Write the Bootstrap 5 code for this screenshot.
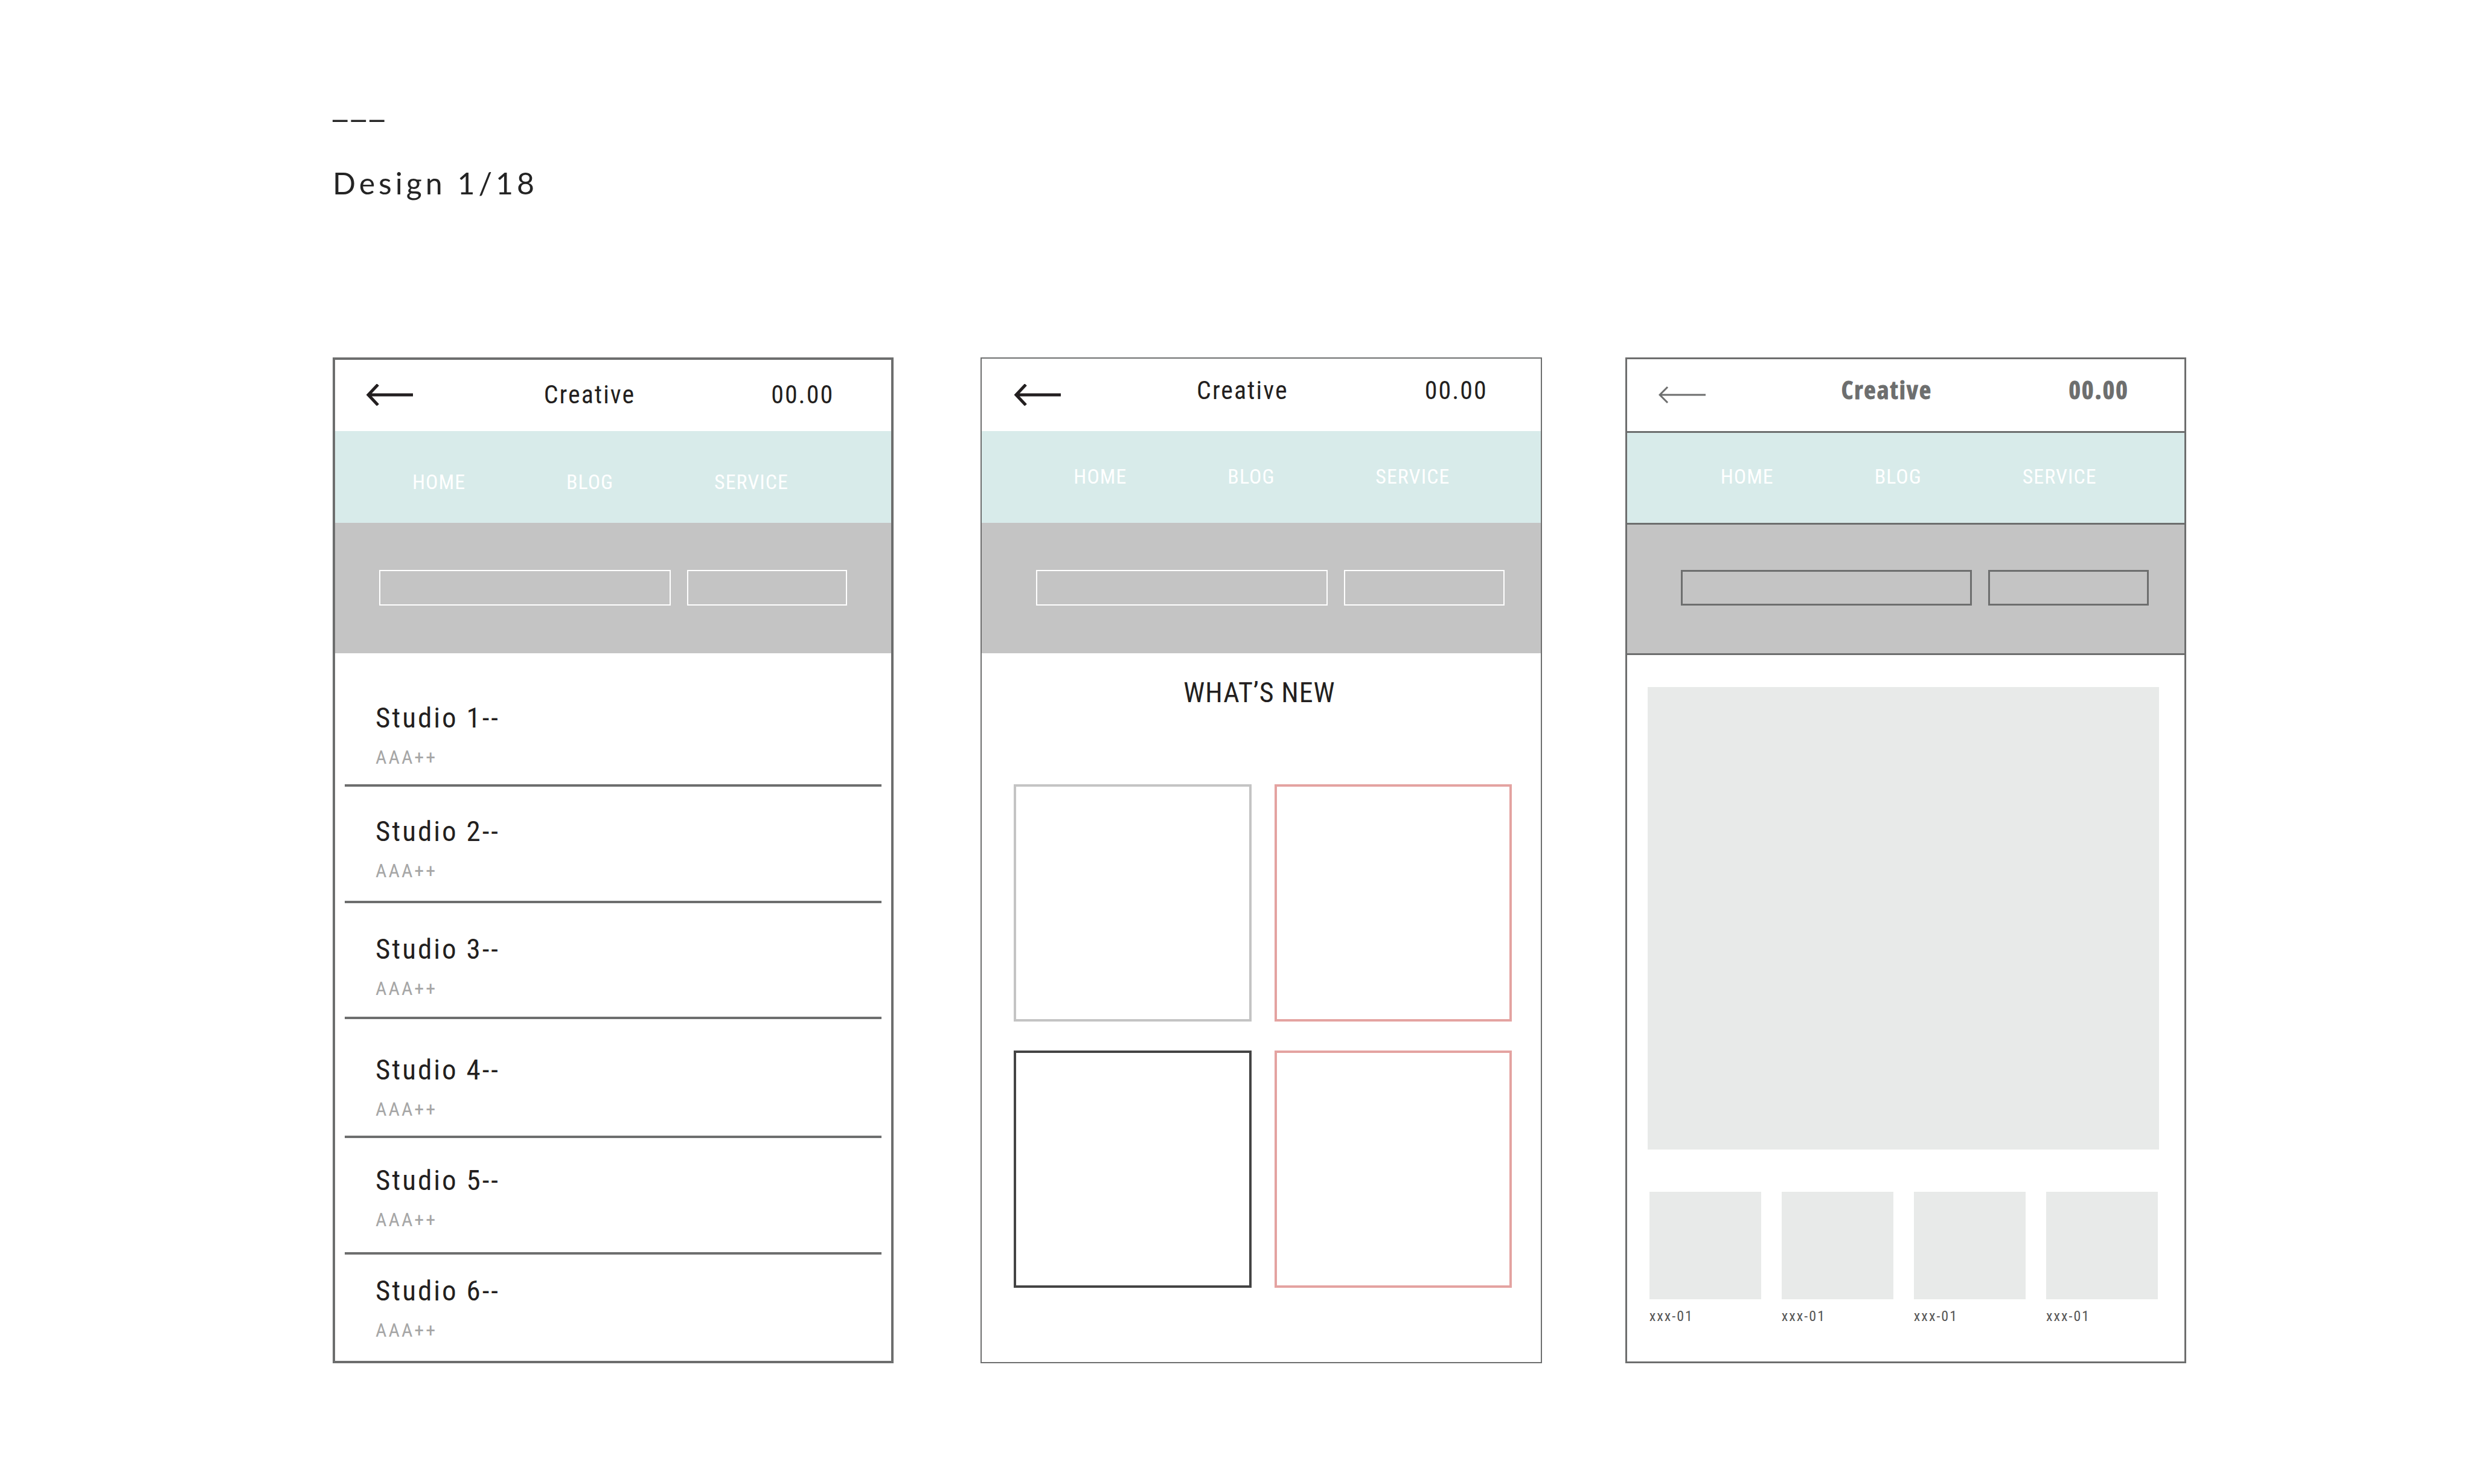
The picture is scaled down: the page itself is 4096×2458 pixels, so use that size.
<!DOCTYPE html>
<html lang="en">
<head>
<meta charset="utf-8">
<meta name="viewport" content="width=device-width, initial-scale=1">
<title>Design 1/18</title>
<link rel="stylesheet" href="https://cdn.jsdelivr.net/npm/bootstrap@5.3.0/dist/css/bootstrap.min.css">
<style>
  :root { --ink: #231f20; --line: #6d6e6e; --mint: #d8ebea; --silver: #c4c4c4; --pale: #e8eae9; }
  body { background: #fff; color: var(--ink); font-family: "Roboto Condensed", Roboto, "Liberation Sans", sans-serif; }
  a { color: inherit; text-decoration: none; }

  .board { padding: 141px 475px 200px 551px; }
  .board-head { height: 451px; font-family: Lato, "Open Sans", sans-serif; color: #242424; }
  .board-dash { font-family: "Open Sans", sans-serif; font-size: 56px; line-height: 60px; letter-spacing: 6px; }
  .board-title { font-size: 50px; line-height: 60px; letter-spacing: 6px; margin: 72px 0 0; font-weight: 400; }
  .screens { grid-template-columns: repeat(3, minmax(0, 1fr)); gap: 141px; }

  .phone { --bw: 4px; --up: 41px; --brand: 296fr; --tail: 200fr; --nav-x: 132px; --nav-y: 68px; --form-x: 77px; --sep: 0px;
    border: var(--bw) solid var(--line); }
  .phone-new { --bw: 2px; --up: 34px; --brand: 303fr; --tail: 192fr; --nav-x: 154px; --nav-y: 59px; --form-x: 92px; margin: 0 -3px 0 3px; }
  .phone-shop { --bw: 3px; --up: 32px; --brand: 304fr; --tail: 192fr; --nav-x: 158px; --nav-y: 59px; --form-x: 92px; --sep: 3px; }

  .bar-top { height: calc(122px - var(--bw)); padding-left: calc(55px - var(--bw)); grid-template-columns: var(--brand) 378fr var(--tail); align-items: start; }
  .bar-top span { padding-top: calc(var(--up) - var(--bw)); font-size: 42px; line-height: 42px; letter-spacing: 2px; }
  .bar-top svg { display: block; margin-top: calc(44px - var(--bw)); fill: none; stroke: var(--ink); stroke-width: 5; }
  .phone-shop .bar-top { color: var(--line); font-family: "Open Sans Condensed", "Roboto Condensed", sans-serif; font-weight: 700; -webkit-text-stroke: 1px var(--line); }
  .phone-shop .bar-top svg { stroke: var(--line); stroke-width: 3; }

  .bar-nav { height: 152px; background: var(--mint); color: #fff; border-top: var(--sep) solid var(--line);
    padding: calc(var(--nav-y) - var(--sep)) 0 0 calc(var(--nav-x) - var(--bw)); }
  .bar-nav a { font-size: 34px; line-height: 32px; letter-spacing: 1px; }
  .bar-nav a:nth-child(1) { width: 255px; }
  .bar-nav a:nth-child(2) { width: 245px; }

  .bar-form { height: 216px; background: var(--silver); border-top: var(--sep) solid var(--line); gap: 27px;
    padding: calc(78px - var(--sep)) calc(154px - var(--form-x) - var(--bw)) 0 calc(var(--form-x) - var(--bw)); }
  .slot { height: 59px; padding: 0; border: 2px solid #fff; border-radius: 0; background: transparent; font-size: 32px; min-width: 0; }
  .slot-wide { flex: 483 1 0; }
  .slot-thin { flex: 264 1 0; }
  .phone-shop .slot { border: 3px solid var(--line); }
  .panel { border-top: var(--sep) solid var(--line); }

  .studios { margin: 0 16px; }
  .studio { border-bottom: 4px solid var(--line); padding: 50px 0 34px 51px; }
  .studio:nth-child(1) { padding-top: 83px; padding-bottom: 29px; }
  .studio:nth-child(3) { padding-top: 52px; padding-bottom: 31px; }
  .studio:nth-child(4) { padding-top: 60px; padding-bottom: 28px; }
  .studio:nth-child(5) { padding-top: 46px; padding-bottom: 38px; }
  .studio:nth-child(6) { padding-top: 36px; padding-bottom: 35px; border-bottom: 0; }
  .studio-name { font-size: 47px; line-height: 48px; letter-spacing: 3px; }
  .studio-rank { margin-top: 25px; font-size: 32px; line-height: 32px; letter-spacing: 3px; color: #a6a6a6; }

  .new-title { margin: 0; padding: 43px 6px 0 0; font-size: 46px; line-height: 44px; letter-spacing: 1px; font-weight: 400; text-align: center; }
  .new-grid { grid-template-columns: 1fr 1fr; gap: 48px 38px; margin: 130px 48px 0 53px; }
  .tile { aspect-ratio: 1; border: 4px solid var(--silver); }
  .tile-rose { border-color: #e4a3a1; }
  .tile-dark { border-color: #444; }

  .hero-shot { aspect-ratio: 847 / 766; margin: 53px 42px 0 34px; background: var(--pale); }
  .thumbs { grid-template-columns: repeat(4, 1fr); gap: 34px; margin: 70px 44px 0 37px; font-size: 24px; line-height: 24px; letter-spacing: 2px; color: #555; }
  .thumb-shot { aspect-ratio: 185 / 178; margin-bottom: 16px; background: var(--pale); }
</style>
</head>
<body>
<main class="board">
  <header class="board-head">
    <div class="board-dash">___</div>
    <h1 class="board-title">Design 1/18</h1>
  </header>

  <div class="screens d-grid">
    <section class="phone phone-list">
      <header class="bar-top d-grid">
        <a href="#" aria-label="Back"><svg width="78" height="36" viewBox="0 0 78 36"><path d="M20 1 4 18l16 17M4 18h74"/></svg></a>
        <span>Creative</span>
        <span>00.00</span>
      </header>
      <nav class="bar-nav d-flex align-items-start"><a href="#">HOME</a><a href="#">BLOG</a><a href="#">SERVICE</a></nav>
      <form class="bar-form d-flex align-items-start">
        <input class="slot slot-wide" type="text" aria-label="Search">
        <button class="slot slot-thin" type="button" aria-label="Go"></button>
      </form>
      <ul class="studios list-unstyled">
        <li class="studio"><div class="studio-name">Studio 1--</div><div class="studio-rank">AAA++</div></li>
        <li class="studio"><div class="studio-name">Studio 2--</div><div class="studio-rank">AAA++</div></li>
        <li class="studio"><div class="studio-name">Studio 3--</div><div class="studio-rank">AAA++</div></li>
        <li class="studio"><div class="studio-name">Studio 4--</div><div class="studio-rank">AAA++</div></li>
        <li class="studio"><div class="studio-name">Studio 5--</div><div class="studio-rank">AAA++</div></li>
        <li class="studio"><div class="studio-name">Studio 6--</div><div class="studio-rank">AAA++</div></li>
      </ul>
    </section>

    <section class="phone phone-new">
      <header class="bar-top d-grid">
        <a href="#" aria-label="Back"><svg width="78" height="36" viewBox="0 0 78 36"><path d="M20 1 4 18l16 17M4 18h74"/></svg></a>
        <span>Creative</span>
        <span>00.00</span>
      </header>
      <nav class="bar-nav d-flex align-items-start"><a href="#">HOME</a><a href="#">BLOG</a><a href="#">SERVICE</a></nav>
      <form class="bar-form d-flex align-items-start">
        <input class="slot slot-wide" type="text" aria-label="Search">
        <button class="slot slot-thin" type="button" aria-label="Go"></button>
      </form>
      <h2 class="new-title">WHAT’S NEW</h2>
      <div class="new-grid d-grid">
        <div class="tile"></div>
        <div class="tile tile-rose"></div>
        <div class="tile tile-dark"></div>
        <div class="tile tile-rose"></div>
      </div>
    </section>

    <section class="phone phone-shop">
      <header class="bar-top d-grid">
        <a href="#" aria-label="Back"><svg width="78" height="36" viewBox="0 0 78 36"><path d="M15 5 2 18l13 13M2 18h76"/></svg></a>
        <span>Creative</span>
        <span>00.00</span>
      </header>
      <nav class="bar-nav d-flex align-items-start"><a href="#">HOME</a><a href="#">BLOG</a><a href="#">SERVICE</a></nav>
      <form class="bar-form d-flex align-items-start">
        <input class="slot slot-wide" type="text" aria-label="Search">
        <button class="slot slot-thin" type="button" aria-label="Go"></button>
      </form>
      <div class="panel">
        <div class="hero-shot"></div>
        <div class="thumbs d-grid">
          <div><div class="thumb-shot"></div>xxx-01</div>
          <div><div class="thumb-shot"></div>xxx-01</div>
          <div><div class="thumb-shot"></div>xxx-01</div>
          <div><div class="thumb-shot"></div>xxx-01</div>
        </div>
      </div>
    </section>
  </div>
</main>
<script src="https://cdn.jsdelivr.net/npm/bootstrap@5.3.0/dist/js/bootstrap.bundle.min.js"></script>
</body>
</html>
